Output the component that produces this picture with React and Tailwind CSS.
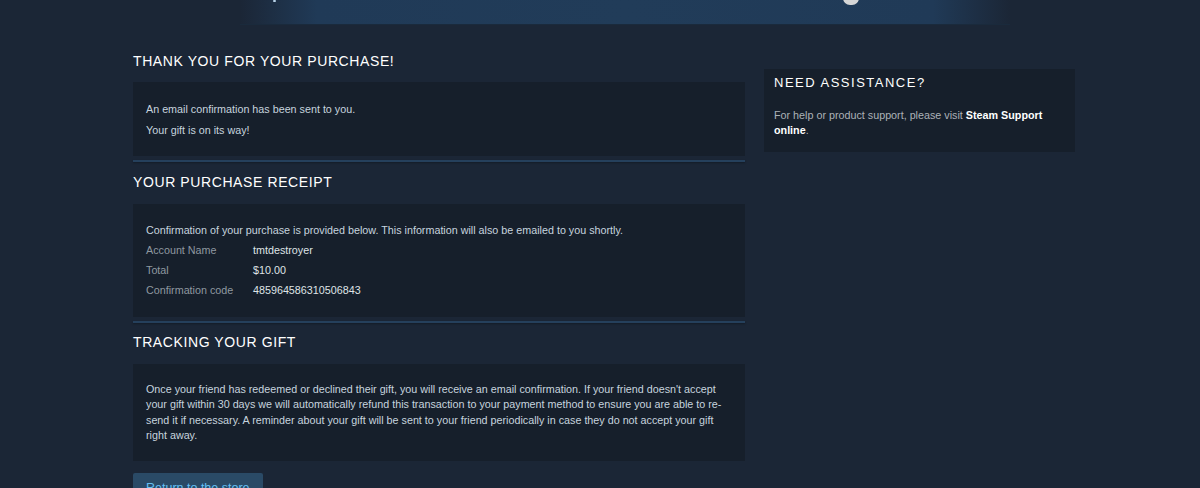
const FONT = { fontFamily: '"Liberation Sans", Arial, sans-serif' };

function Heading({ children }) {
  return (
    <h2 className="text-[14px] leading-[20px] text-white uppercase tracking-[0.6px] font-normal">
      {children}
    </h2>
  );
}

function Divider() {
  return <div className="h-[2px] bg-[#25405c] shadow-[0_1px_2px_rgba(0,0,0,0.3)]" />;
}

export default function App() {
  return (
    <div className="min-h-[488px] bg-[#1b2636] text-[#acb2b8] overflow-hidden" style={FONT}>
      {/* ── Header ── */}
      <div className="flex justify-center pl-[50px]">
        <div className="relative w-[770px] h-[25px] bg-[linear-gradient(90deg,rgba(33,59,87,0)_0%,#203a57_10%,#213c59_50%,#203a57_90%,rgba(33,59,87,0)_100%)] border-b border-[#1a2a3c]">
          <div className="absolute left-[33px] top-0 w-[3px] h-[2px] rounded-full bg-[#b8d3e8]" />
          <div className="absolute left-[603px] -top-[9px] w-[16px] h-[14px] rounded-full bg-[#d6d6d6]" />
        </div>
      </div>

      <div className="flex justify-center gap-[19px] pl-[8px]">
        {/* ── Left column ── */}
        <div className="w-[612px] pt-[26px]">
          <Heading>Thank you for your purchase!</Heading>
          <div className="mt-[11px] bg-[#161f2b] px-[13px] pt-[19px] pb-[18px] text-[10.75px] leading-[16px] text-[#c6d4df]">
            <p>An email confirmation has been sent to you.</p>
            <p className="mt-[5px]">Your gift is on its way!</p>
          </div>
          <div className="mt-[4px]"><Divider /></div>

          <div className="mt-[10px]"><Heading>Your purchase receipt</Heading></div>
          <div className="mt-[12px] bg-[#161f2b] px-[13px] pt-[18px] pb-[19px] text-[10.75px] leading-[16px]">
            <p className="text-[#c6d4df]">
              Confirmation of your purchase is provided below. This information will also be emailed to you shortly.
            </p>
            <div className="grid grid-cols-[107px_1fr] gap-y-[4px] mt-[4px]">
              <span className="text-[#8f98a0]">Account Name</span>
              <span className="text-[#dfe3e6]">tmtdestroyer</span>
              <span className="text-[#8f98a0]">Total</span>
              <span className="text-[#dfe3e6]">$10.00</span>
              <span className="text-[#8f98a0]">Confirmation code</span>
              <span className="text-[#dfe3e6]">485964586310506843</span>
            </div>
          </div>
          <div className="mt-[4px]"><Divider /></div>

          <div className="mt-[9px]"><Heading>Tracking your gift</Heading></div>
          <div className="mt-[12px] bg-[#161f2b] pl-[13px] pr-[10px] pt-[18px] pb-[18px] text-[10.75px] leading-[15.3px] text-[#c6d4df]">
            <p>
              Once your friend has redeemed or declined their gift, you will receive an email confirmation. If your friend doesn't accept your gift within 30 days we will automatically refund this transaction to your payment method to ensure you are able to re-send it if necessary. A reminder about your gift will be sent to your friend periodically in case they do not accept your gift right away.
            </p>
          </div>

          <button className="mt-[12px] h-[30px] px-[13px] rounded-[2px] bg-[#2a4a66] text-[#66c0f4] text-[12.5px] leading-[30px]">
            Return to the store
          </button>
        </div>

        {/* ── Right column ── */}
        <div className="w-[311px] pt-[44px]">
          <div className="bg-[#161f2b] px-[10px] pt-[5px] pb-[14px]">
            <h3 className="text-[13px] leading-[18px] text-white uppercase tracking-[1.5px]">Need assistance?</h3>
            <p className="mt-[16px] text-[10.75px] leading-[15px] text-[#acb2b8]">
              For help or product support, please visit{' '}
              <span className="text-white font-bold">Steam Support online</span>.
            </p>
          </div>
        </div>
      </div>
    </div>
  );
}
